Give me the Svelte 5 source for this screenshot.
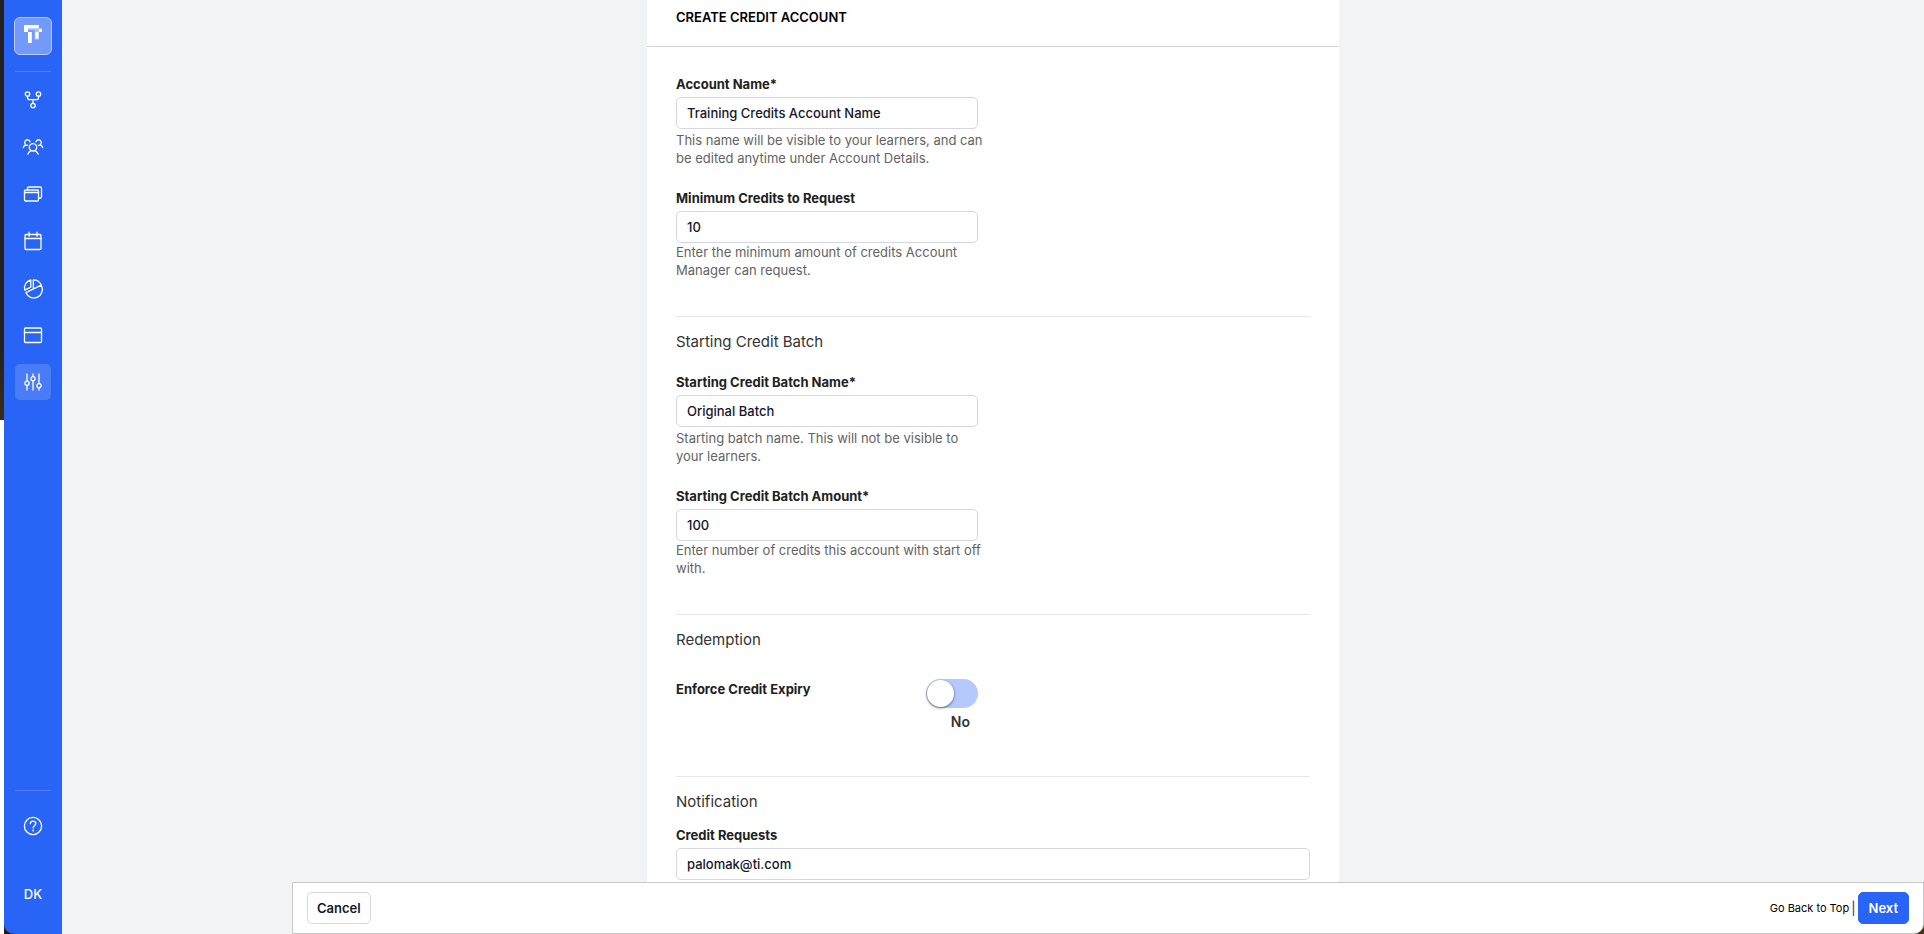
<script lang="ts">
  const navItems = [
    { id: "branches", label: "Branches" },
    { id: "people", label: "People" },
    { id: "courses", label: "Courses" },
    { id: "calendar", label: "Calendar" },
    { id: "reports", label: "Reports" },
    { id: "site", label: "Site" },
    { id: "settings", label: "Settings" },
  ];

  let active = $state("settings");
  let accountName = $state("Training Credits Account Name");
  let minimumCredits = $state("10");
  let batchName = $state("Original Batch");
  let batchAmount = $state("100");
  let enforceExpiry = $state(false);
  let creditRequests = $state("palomak@ti.com");

  let scroller: HTMLElement;

  function backToTop(e: MouseEvent) {
    e.preventDefault();
    scroller.scrollTo({ top: 0, behavior: "smooth" });
  }
</script>

{#snippet icon(id: string)}
  <svg class="icon" viewBox="0 0 20 20" aria-hidden="true">
    {#if id === "branches"}
      <circle cx="4.5" cy="4" r="2.2" />
      <circle cx="15.5" cy="4" r="2.2" />
      <circle cx="10" cy="15.5" r="2.2" />
      <path d="M4.5 6.2v1.3q0 2.2 2.2 2.2h6.6q2.2 0 2.2-2.2V6.2M10 9.7v3.6" />
    {:else if id === "people"}
      <circle cx="10" cy="10.3" r="3.7" />
      <path d="M4.8 17.2c.7-1.7 1.6-2.6 2.9-3.3M15.2 17.200c-.7-1.7-1.600-2.600-2.900-3.300" />
      <path d="M7 4.800C6.300 2.800 4.200 2.200 2.700 3.400 1.300 4.600 1.400 6.600 2.700 7.800M2.700 7.800C1.400 8.400.7 9.200.3 10.600M2.700 7.800l1.900.6" />
      <path d="M13 4.800c.7-2 2.800-2.600 4.300-1.400 1.400 1.200 1.300 3.200 0 4.400M17.300 7.800c1.300.6 2 1.400 2.400 2.800M17.300 7.800l-1.900.6" />
    {:else if id === "courses"}
      <rect x="1.5" y="6" width="14" height="11" rx="1" />
      <path d="M1.5 8.500h14M4.500 6V4.200q0-1.200 1.200-1.200h11.600q1.200 0 1.200 1.200v8.600q0 1.200-1.200 1.200h-1.800" />
    {:else if id === "calendar"}
      <rect x="2" y="3.5" width="16" height="15" rx="1" />
      <path d="M2 7.5h16M6 1.2v4M14 1.2v4" />
    {:else if id === "reports"}
      <path d="M18.3 7.2A8.6 8.6 0 1 1 2.8 14.6L18.3 7.2A8.6 8.6 0 0 0 10.3 1.8V10.8" />
      <path d="M7.8 2v7.2L1.8 12.2C.7 7.4 3 3.2 7.8 2z" />
    {:else if id === "site"}
      <rect x="1.5" y="3" width="17" height="14.5" rx="1" />
      <path d="M1.5 7.5h17" />
    {:else if id === "settings"}
      <path d="M4 2v7M4 13.5V18M10 2v2.5M10 9v9M16 2v9.5M16 16v2" />
      <circle cx="4" cy="11.2" r="2.1" />
      <circle cx="10" cy="6.7" r="2.1" />
      <circle cx="16" cy="13.7" r="2.1" />
    {:else if id === "help"}
      <circle cx="10" cy="10" r="8.6" />
      <path d="M7.3 7.7c.1-1.6 1.3-2.5 2.8-2.5s2.7 1 2.7 2.4c0 1.9-2.7 2.2-2.7 4.3" />
      <circle class="dot" cx="10.1" cy="14.5" r=".9" />
    {/if}
  </svg>
{/snippet}

<div class="shell">
  <div class="edge"></div>
  <div class="rail">
    <nav class="sidebar" aria-label="Main">
      <a class="logo" href="#home" aria-label="Home">
        <svg viewBox="0 0 18 18" aria-hidden="true">
          <path class="cut" d="M4 3h11v11.700h-4.500V5H4z" />
          <path d="M0 0h15v3.200H4V7H0z" />
          <path d="M15 3.700h3V7h-3z" />
          <path d="M4 7h3.800v11H4zM11.500 7h3v6.500h-3z" />
        </svg>
      </a>
      <hr />
      {#each navItems as item (item.id)}
        <button
          class="nav-item"
          class:active={active === item.id}
          aria-label={item.label}
          onclick={() => (active = item.id)}
        >
          {@render icon(item.id)}
        </button>
      {/each}
      <div class="bottom">
        <hr />
        <button class="nav-item" aria-label="Help">{@render icon("help")}</button>
        <button class="user">DK</button>
      </div>
    </nav>
  </div>

  <div class="main">
    <main class="scroller" bind:this={scroller}>
      <form id="credit-form" class="card" onsubmit={(e) => e.preventDefault()}>
        <header><h1>Create Credit Account</h1></header>

        <section class="first">
          <div class="field">
            <label for="account-name">Account Name*</label>
            <input id="account-name" type="text" bind:value={accountName} />
            <p class="spaced">This name will be visible to your learners, and can be edited anytime under Account Details.</p>
          </div>
          <div class="field">
            <label for="minimum">Minimum Credits to Request</label>
            <input id="minimum" type="text" inputmode="numeric" bind:value={minimumCredits} />
            <p>Enter the minimum amount of credits Account Manager can request.</p>
          </div>
        </section>

        <section>
          <h2>Starting Credit Batch</h2>
          <div class="field">
            <label for="batch-name">Starting Credit Batch Name*</label>
            <input id="batch-name" type="text" bind:value={batchName} />
            <p class="spaced">Starting batch name. This will not be visible to your learners.</p>
          </div>
          <div class="field">
            <label for="batch-amount">Starting Credit Batch Amount*</label>
            <input id="batch-amount" type="text" inputmode="numeric" bind:value={batchAmount} />
            <p>Enter number of credits this account with start off with.</p>
          </div>
        </section>

        <section class="redemption">
          <h2>Redemption</h2>
          <div class="field toggle-row">
            <label for="expiry">Enforce Credit Expiry</label>
            <div class="toggle">
              <input id="expiry" type="checkbox" role="switch" bind:checked={enforceExpiry} />
              <span>{enforceExpiry ? "Yes" : "No"}</span>
            </div>
          </div>
        </section>

        <section class="notification">
          <h2>Notification</h2>
          <div class="field wide">
            <label for="requests">Credit Requests</label>
            <input id="requests" type="email" bind:value={creditRequests} />
          </div>
        </section>
      </form>
    </main>

    <div class="footer-wrap">
      <footer>
        <button class="btn" type="button">Cancel</button>
        <div class="actions">
          <a href="#top" onclick={backToTop}>Go Back to Top</a>
          <span class="bar">|</span>
          <button class="btn primary" type="submit" form="credit-form">Next</button>
        </div>
      </footer>
    </div>
  </div>
</div>

<style>
  :global(body) {
    margin: 0;
    background: #f1f3f5;
    font-family: Inter, "Liberation Sans", sans-serif;
    font-size: 13px;
    color: #212121;
  }
  .shell,
  .shell * {
    box-sizing: border-box;
  }
  .shell {
    display: flex;
    height: 100vh;
  }
  /* Strip of the desktop left of the window */
  .edge {
    flex: 0 0 4px;
    background: linear-gradient(#23201f 0 36%, #3b2c17 45%, #fff 45%);
  }
  .rail {
    flex: 0 0 58px;
    background: #2a1c0c;
  }
  .sidebar {
    display: flex;
    flex-direction: column;
    align-items: center;
    height: 100%;
    padding: 17px 0 22px;
    background: #2864f6;
    border-radius: 0 0 0 10px;
  }
  .logo {
    display: flex;
    align-items: center;
    justify-content: center;
    width: 38px;
    height: 38px;
    flex: 0 0 auto;
    border: 1px solid #c0cae8;
    border-radius: 6px;
    background: #7399f9;
  }
  .logo svg {
    width: 18px;
    height: 18px;
    margin-bottom: 4px;
    fill: #fff;
  }
  .logo .cut {
    fill: #a9c0fb;
  }
  .sidebar hr {
    width: 36px;
    height: 1px;
    margin: 16px 0 0;
    border: none;
    background: #4f80f8;
  }
  .nav-item {
    display: flex;
    align-items: center;
    justify-content: center;
    width: 36px;
    height: 36px;
    flex: 0 0 auto;
    margin-top: 11px;
    padding: 0;
    border: none;
    border-radius: 5px;
    background: transparent;
    cursor: pointer;
  }
  hr + .nav-item {
    margin-top: 10px;
  }
  .nav-item.active {
    background: #4a7cf7;
  }
  .icon {
    width: 20px;
    height: 20px;
    overflow: visible;
    fill: none;
    stroke: #fff;
    stroke-width: 1.3;
    stroke-linecap: round;
    stroke-linejoin: round;
  }
  .icon .dot {
    fill: #fff;
    stroke: none;
  }
  .bottom {
    display: flex;
    flex-direction: column;
    align-items: center;
    margin-top: auto;
  }
  .bottom .nav-item {
    margin-top: 17px;
  }
  .user {
    height: 36px;
    margin-top: 32px;
    padding: 0;
    border: none;
    background: transparent;
    color: #fff;
    font: 500 13px/36px Inter, sans-serif;
    cursor: pointer;
  }

  .main {
    display: flex;
    flex: 1 1 auto;
    flex-direction: column;
    min-width: 0;
  }
  .scroller {
    flex: 1 1 auto;
    min-height: 0;
    overflow-y: auto;
    scrollbar-width: none;
  }
  .card {
    width: 100%;
    max-width: 692px;
    min-height: 100%;
    margin: 0 auto;
    background: #fff;
  }
  header {
    padding: 8px 29px 19px;
    border-bottom: 1px solid #d2d3de;
  }
  h1 {
    margin: 0;
    font-size: 13px;
    line-height: 19px;
    font-weight: 600;
    text-transform: uppercase;
    color: #000;
  }
  section {
    margin: 0 29px;
    padding: 14px 0 37px;
    border-top: 1px solid #e6e7ea;
  }
  section.first {
    padding-top: 27px;
    border-top: none;
  }
  h2 {
    margin: 0 0 19px;
    font-size: 15px;
    line-height: 22px;
    font-weight: 400;
    color: #333;
  }
  .field {
    width: 302px;
  }
  .field + .field {
    margin-top: 21px;
  }
  .field.wide {
    width: 100%;
  }
  label {
    display: block;
    margin-bottom: 3px;
    line-height: 20px;
    font-weight: 700;
  }
  .field input:not([type="checkbox"]) {
    display: block;
    width: 100%;
    height: 32px;
    padding: 0 10px;
    border: 1px solid #d5d6e1;
    border-radius: 5px;
    background: #fff;
    color: #14172b;
    font: 500 13px/18px Inter, sans-serif;
    outline: none;
  }
  .field input:not([type="checkbox"]):focus {
    border-color: #2864f6;
  }
  p {
    margin: 0 -8px 0 0;
    line-height: 18px;
    color: #636363;
  }
  p.spaced {
    padding-top: 2px;
  }

  .toggle-row {
    display: flex;
    justify-content: space-between;
  }
  .redemption {
    padding-bottom: 44px;
  }
  .redemption h2 {
    margin-bottom: 28px;
  }
  .toggle {
    display: flex;
    flex-direction: column;
    align-items: flex-end;
  }
  .toggle span {
    padding: 4px 8px 0 0;
    font-size: 14px;
    line-height: 20px;
    font-weight: 600;
    color: #333;
  }
  .toggle input {
    display: flex;
    width: 52px;
    height: 29px;
    margin: 0;
    padding: 1px;
    appearance: none;
    border-radius: 15px;
    background: #b5c9fc;
    cursor: pointer;
  }
  .toggle input::before {
    content: "";
    width: 27px;
    height: 27px;
    border-radius: 50%;
    background: #fff;
    box-shadow: 0 1px 3px rgba(0, 0, 0, 0.5);
  }
  .toggle input:checked {
    justify-content: flex-end;
    background: #2864f6;
  }
  .notification {
    padding-bottom: 0;
  }
  .notification h2 {
    margin-bottom: 12px;
  }

  /* Save bar along the bottom of the window */
  .footer-wrap {
    flex: 0 0 auto;
    margin-left: 230px;
    background: linear-gradient(90deg, transparent 50%, #4a2f08 50%);
  }
  footer {
    display: flex;
    align-items: center;
    justify-content: space-between;
    height: 52px;
    padding: 0 14px;
    border: 1px solid #c8c8c8;
    border-bottom-right-radius: 10px;
    background: #fff;
  }
  .actions {
    display: flex;
    align-items: center;
  }
  .actions a {
    font-size: 11px;
    color: #000;
    text-decoration: none;
  }
  .bar {
    margin: 0 2px;
    color: #333;
  }
  .btn {
    height: 32px;
    padding: 0 9px;
    border: 1px solid #d5d6e1;
    border-radius: 5px;
    background: #fff;
    color: #14172b;
    font: 600 13px/18px Inter, sans-serif;
    cursor: pointer;
  }
  .btn.primary {
    padding: 0 10px;
    border-color: #2864f6;
    background: #2864f6;
    color: #fff;
  }
</style>
